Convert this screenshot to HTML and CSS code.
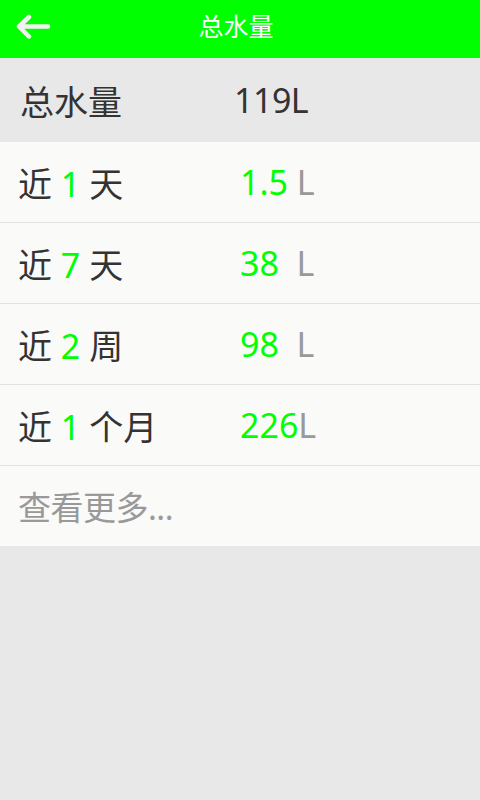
FILE: index.html
```html
<!DOCTYPE html>
<html lang="zh">
<head>
<meta charset="utf-8">
<title>总水量</title>
<link rel="stylesheet" href="styles.css">
</head>
<body>
<header class="topbar">
  <svg class="back" width="36" height="26" viewBox="0 0 36 26">
    <path d="M33 12.5H5M14 3L4 12.5l10 10" fill="none" stroke="#f2f2f2" stroke-width="4.5" stroke-linecap="round" stroke-linejoin="round"/>
  </svg>
  <h1 class="title">总水量</h1>
</header>
<section class="total">
  <span class="total-label">总水量</span>
  <span class="total-value">119L</span>
</section>
<ul class="list">
  <li class="row"><span class="label">近 <em>1</em> 天</span><span class="value"><em>1.5</em> L</span></li>
  <li class="row"><span class="label">近 <em>7</em> 天</span><span class="value"><em>38</em>&nbsp; L</span></li>
  <li class="row"><span class="label">近 <em>2</em> 周</span><span class="value"><em>98</em>&nbsp; L</span></li>
  <li class="row"><span class="label">近 <em>1</em> 个月</span><span class="value"><em>226</em>L</span></li>
  <li class="row more">查看更多...</li>
</ul>
</body>
</html>
```

FILE: styles.css
```css
* { box-sizing: border-box; }
html, body { margin: 0; padding: 0; }
body {
  width: 480px;
  height: 800px;
  background: #e8e8e8;
  font-family: "Noto Sans", "Noto Sans CJK SC", sans-serif;
  color: #333;
}
.topbar {
  height: 58px;
  background: #00ff00;
  display: flex;
  align-items: center;
  justify-content: center;
  position: relative;
}
.back {
  position: absolute;
  left: 15px;
  top: 14px;
}
.title {
  margin: 0 8px 5px 0;
  font-size: 25px;
  font-weight: normal;
  color: #fff;
  line-height: 1;
}
.total {
  height: 84px;
  display: flex;
  align-items: center;
  padding-left: 20px;
  font-size: 34px;
  background: #e8e8e8;
}
.total-label { width: 214px; }
.total-value { letter-spacing: -0.5px; }
.list {
  list-style: none;
  margin: 0;
  padding: 0;
  background: #fafaf8;
}
.row {
  height: 81px;
  border-bottom: 1px solid #e2e2e2;
  display: flex;
  align-items: center;
  padding-left: 18px;
  font-size: 34px;
}
.row:last-child { border-bottom: none; height: 80px; }
.label { width: 222px; white-space: pre; }
.row em { font-style: normal; color: #00ff00; }
.value { color: #999; white-space: pre; }
.more { color: #999; font-size: 33px; letter-spacing: -0.5px; }
```
